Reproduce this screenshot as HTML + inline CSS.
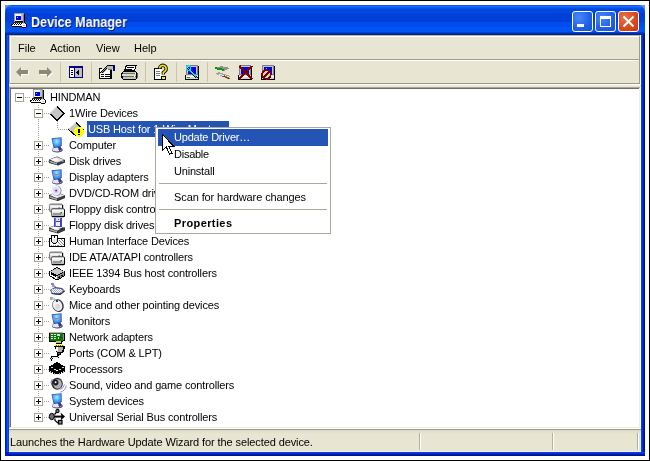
<!DOCTYPE html>
<html><head><meta charset="utf-8"><style>
*{margin:0;padding:0;box-sizing:border-box}
html,body{width:650px;height:461px;overflow:hidden;background:#fff;font-family:"Liberation Sans",sans-serif;font-size:11px;color:#000}
.a{position:absolute}
.t{position:absolute;white-space:nowrap;line-height:16px;height:16px}
.tr{letter-spacing:-0.15px}
.t{will-change:transform}
svg{position:absolute;display:block;overflow:visible}
</style></head><body>

<div class="a" style="left:0;top:0;width:650px;height:461px;border:1px solid #000;background:#fff"></div>
<div class="a" style="left:5px;top:5px;width:640px;height:451px;background:#0845E0"></div>
<div class="a" style="left:5px;top:5px;width:8px;height:8px;background:#7890DC"></div>
<div class="a" style="left:637px;top:5px;width:8px;height:8px;background:#7890DC"></div>
<div class="a" style="left:5px;top:5px;width:640px;height:30px;border-radius:7px 7px 0 0;background:linear-gradient(to bottom,
#1050E0 0px,#1050E0 1px,#2070FF 1px,#2070FF 2px,#0860F8 2px,#0860F8 3px,#0050F0 3px,#0050F0 4px,#0048E0 4px,#0048E0 8px,#0040D8 8px,#0040D8 17px,#004CEC 17px,#004CEC 22px,#0054F4 22px,#0054F4 27px,#0040D0 27px,#0040D0 28px,#0030B0 28px,#0030B0 29px,#002090 29px)"></div>
<div class="a" style="left:5px;top:35px;width:1px;height:421px;background:#0018D0"></div>
<div class="a" style="left:6px;top:35px;width:1px;height:421px;background:#0030E0"></div>
<div class="a" style="left:7px;top:35px;width:1px;height:421px;background:#0858F4"></div>
<div class="a" style="left:8px;top:35px;width:1px;height:421px;background:#0044E4"></div>
<div class="a" style="left:641px;top:35px;width:1px;height:421px;background:#0845EA"></div>
<div class="a" style="left:642px;top:35px;width:1px;height:421px;background:#0030D8"></div>
<div class="a" style="left:643px;top:35px;width:1px;height:421px;background:#001CB0"></div>
<div class="a" style="left:644px;top:35px;width:1px;height:421px;background:#00138C"></div>
<div class="a" style="left:5px;top:452px;width:640px;height:1px;background:#0841E6"></div>
<div class="a" style="left:5px;top:453px;width:640px;height:1px;background:#0030D0"></div>
<div class="a" style="left:5px;top:454px;width:640px;height:1px;background:#001CB0"></div>
<div class="a" style="left:5px;top:455px;width:640px;height:1px;background:#00138C"></div>
<div class="a" style="left:5px;top:452px;width:4px;height:4px;background:#0018D0"></div>
<div class="a" style="left:9px;top:35px;width:632px;height:417px;background:#E8E6D2"></div>
<div class="a" style="left:9px;top:35px;width:632px;height:1px;background:#C0B898"></div>
<div class="a" style="left:9px;top:35px;width:1px;height:52px;background:#C0B898"></div>
<div class="a" style="left:10px;top:36px;width:631px;height:1px;background:#fff"></div>
<div class="a" style="left:10px;top:36px;width:1px;height:49px;background:#fff"></div>
<div class="a" style="left:11px;top:59px;width:630px;height:1px;background:#A09C88"></div>
<div class="a" style="left:11px;top:60px;width:630px;height:1px;background:#fff"></div>
<div class="a" style="left:10px;top:83px;width:630px;height:1px;background:#9C9880"></div>
<div class="a" style="left:9px;top:84px;width:632px;height:1px;background:#fff"></div>
<div class="a" style="left:9px;top:85px;width:632px;height:1px;background:#F0EEDC"></div>
<div class="a" style="left:639px;top:36px;width:1px;height:48px;background:#A09C88"></div>
<div class="a" style="left:640px;top:35px;width:1px;height:50px;background:#fff"></div>
<div class="a" style="left:11px;top:59px;width:628px;height:1px;background:#A09C88"></div>
<div class="a" style="left:10px;top:60px;width:629px;height:1px;background:#fff"></div>
<div class="t" style="left:18px;top:40px">File</div>
<div class="t" style="left:50px;top:40px">Action</div>
<div class="t" style="left:96px;top:40px">View</div>
<div class="t" style="left:134px;top:40px">Help</div>
<div class="a" style="left:60px;top:62px;width:1px;height:20px;background:#C8C4B0"></div>
<div class="a" style="left:91px;top:62px;width:1px;height:20px;background:#C8C4B0"></div>
<div class="a" style="left:145px;top:62px;width:1px;height:20px;background:#C8C4B0"></div>
<div class="a" style="left:176px;top:62px;width:1px;height:20px;background:#C8C4B0"></div>
<div class="a" style="left:207px;top:62px;width:1px;height:20px;background:#C8C4B0"></div>
<svg class="a" style="left:0;top:0" width="60" height="90" viewBox="0 0 60 90"><polygon points="16,72 21,67 21,70 28,70 28,74 21,74 21,77" fill="#fff" transform="translate(1,1)"/><polygon points="16,72 21,67 21,70 28,70 28,74 21,74 21,77" fill="#8C8978"/><polygon points="52,72 47,67 47,70 39,70 39,74 47,74 47,77" fill="#fff" transform="translate(1,1)"/><polygon points="52,72 47,67 47,70 39,70 39,74 47,74 47,77" fill="#8C8978"/></svg>
<svg class="a" style="left:69px;top:66px" width="16" height="16" viewBox="0 0 16 16" shape-rendering="crispEdges"><rect x="0" y="0" width="14" height="12" fill="#000080"/><rect x="1" y="2" width="4" height="9" fill="#fff"/><rect x="6" y="2" width="7" height="9" fill="#C0C0C0"/><rect x="2" y="4" width="2" height="1" fill="#000"/><rect x="2" y="6" width="2" height="1" fill="#000"/><rect x="2" y="8" width="2" height="1" fill="#000"/><polygon points="10,3.5 7,6.5 10,9.5" fill="#000"/></svg>
<svg class="a" style="left:98px;top:64px" width="18" height="16" viewBox="0 0 18 16" shape-rendering="crispEdges"><rect x="1" y="4" width="13" height="11" fill="#000"/><rect x="2" y="5" width="10" height="9" fill="#fff"/><rect x="3" y="10" width="3" height="1" fill="#000"/><rect x="7" y="10" width="5" height="1" fill="#000"/><rect x="3" y="12" width="3" height="1" fill="#000"/><rect x="7" y="12" width="5" height="1" fill="#000"/><rect x="4" y="4" width="8" height="1" fill="#E8E6D2"/><rect x="12" y="4" width="1" height="1" fill="#E8E6D2"/><rect x="2" y="8" width="1" height="1" fill="#000"/><rect x="3" y="7" width="1" height="1" fill="#000"/><rect x="3" y="8" width="1" height="1" fill="#A0A0A0"/><rect x="4" y="6" width="1" height="1" fill="#000"/><rect x="4" y="7" width="1" height="1" fill="#A0A0A0"/><rect x="4" y="8" width="1" height="1" fill="#000"/><rect x="5" y="5" width="1" height="1" fill="#000"/><rect x="5" y="6" width="1" height="1" fill="#A0A0A0"/><rect x="5" y="7" width="1" height="1" fill="#000"/><rect x="5" y="8" width="1" height="1" fill="#A0A0A0"/><rect x="6" y="4" width="1" height="1" fill="#000"/><rect x="6" y="5" width="1" height="1" fill="#A0A0A0"/><rect x="6" y="6" width="1" height="1" fill="#000"/><rect x="6" y="7" width="1" height="1" fill="#A0A0A0"/><rect x="7" y="3" width="1" height="1" fill="#000"/><rect x="7" y="4" width="1" height="1" fill="#A0A0A0"/><rect x="7" y="5" width="1" height="1" fill="#000"/><rect x="7" y="6" width="1" height="1" fill="#A0A0A0"/><rect x="8" y="2" width="1" height="1" fill="#000"/><rect x="8" y="3" width="1" height="1" fill="#A0A0A0"/><rect x="8" y="4" width="1" height="1" fill="#000"/><rect x="8" y="5" width="1" height="1" fill="#A0A0A0"/><rect x="9" y="1" width="1" height="1" fill="#000"/><rect x="9" y="2" width="1" height="1" fill="#A0A0A0"/><rect x="9" y="3" width="1" height="1" fill="#000"/><rect x="9" y="4" width="1" height="1" fill="#A0A0A0"/><rect x="10" y="1" width="1" height="1" fill="#A0A0A0"/><rect x="10" y="2" width="1" height="1" fill="#000"/><rect x="10" y="3" width="1" height="1" fill="#A0A0A0"/><rect x="9" y="1" width="6" height="1" fill="#000"/><rect x="9" y="2" width="6" height="3" fill="#B8B8B8"/><rect x="10" y="5" width="4" height="1" fill="#707070"/><rect x="15" y="1" width="2" height="6" fill="#000080"/></svg>
<svg class="a" style="left:121px;top:64px" width="17" height="16" viewBox="0 0 17 16" shape-rendering="crispEdges"><polygon points="5,1 16,1 14,7 3,7" fill="#000"/><polygon points="6,2 14.6,2 13.2,6 4.4,6" fill="#fff"/><rect x="6" y="3" width="7" height="1" fill="#000"/><rect x="5" y="5" width="6" height="1" fill="#000"/><rect x="2" y="7" width="13" height="1" fill="#000"/><rect x="1" y="8" width="1" height="7" fill="#000"/><rect x="0" y="9" width="1" height="5" fill="#000"/><rect x="2" y="15" width="13" height="1" fill="#000"/><rect x="15" y="8" width="1" height="7" fill="#000"/><rect x="2" y="8" width="13" height="1" fill="#C8C8C8"/><rect x="2" y="9" width="13" height="1" fill="#707070"/><rect x="1" y="10" width="14" height="2" fill="#D8D8D8"/><rect x="8" y="11" width="3" height="1" fill="#F0F000"/><rect x="2" y="12" width="13" height="1" fill="#707070"/><rect x="2" y="13" width="13" height="2" fill="#C0C0C0"/><rect x="14" y="9" width="1" height="1" fill="#fff"/><rect x="13" y="12" width="1" height="1" fill="#fff"/><rect x="16" y="9" width="1" height="5" fill="#606060"/></svg>
<svg class="a" style="left:154px;top:64px" width="16" height="16" viewBox="0 0 16 16" shape-rendering="crispEdges"><rect x="0" y="4" width="8" height="12" fill="#000"/><rect x="1" y="5" width="7" height="10" fill="#fff"/><rect x="2" y="7" width="4" height="1" fill="#808080"/><rect x="2" y="9" width="4" height="1" fill="#808080"/><rect x="2" y="11" width="4" height="1" fill="#808080"/><path d="M5.6,4.4 A3.3,3.3 0 1 1 11,7.2 L9.3,8.6 L9.3,10.6" fill="none" stroke="#000" stroke-width="3.4" shape-rendering="geometricPrecision"/><path d="M5.6,4.4 A3.3,3.3 0 1 1 11,7.2 L9.3,8.6 L9.3,10.6" fill="none" stroke="#F8F000" stroke-width="1.6" shape-rendering="geometricPrecision"/><rect x="7" y="12" width="5" height="4" fill="#000"/><rect x="8" y="13" width="3" height="2" fill="#F8F000"/></svg>
<svg class="a" style="left:185px;top:64px" width="16" height="16" viewBox="0 0 16 16" shape-rendering="crispEdges"><rect x="1" y="1" width="12" height="10" fill="#808080"/><rect x="2" y="2" width="10" height="8" fill="#C8C8C8"/><rect x="3" y="3" width="8" height="7" fill="#0000F0"/><rect x="13" y="2" width="1" height="9" fill="#000"/><rect x="0" y="11" width="14" height="5" fill="#000"/><rect x="1" y="11" width="12" height="4" fill="#D8D8D8"/><rect x="1" y="12" width="12" height="1" fill="#fff"/><rect x="2" y="13" width="3" height="1" fill="#00A000"/><path d="M3,4 L12,14" stroke="#000" stroke-width="2.2"/><path d="M3,4 L12,14" stroke="#00E8F0" stroke-width="1.2"/><circle cx="3.5" cy="4" r="2.2" fill="none" stroke="#00E0F0" stroke-width="1.3"/></svg>
<svg class="a" style="left:214px;top:64px" width="17" height="16" viewBox="0 0 17 16" shape-rendering="crispEdges"><polygon points="1,4 7,2 16,4 10,7" fill="#909090"/><path d="M1,4 L10,6" stroke="#109010" stroke-width="2"/><polygon points="1,10 5,8 16,12 14,14" fill="#A0A0A0"/><path d="M5,10 L15,13" stroke="#fff" stroke-width="0.8"/><path d="M10,12 L15,14" stroke="#C06010" stroke-width="1.6"/><path d="M8,12 L16,15" stroke="#000" stroke-width="0.8" opacity="0.7"/></svg>
<svg class="a" style="left:238px;top:64px" width="16" height="16" viewBox="0 0 16 16" shape-rendering="crispEdges"><rect x="1" y="1" width="12" height="10" fill="#808080"/><rect x="2" y="2" width="10" height="8" fill="#C8C8C8"/><rect x="3" y="3" width="8" height="7" fill="#0000F0"/><rect x="13" y="2" width="1" height="9" fill="#000"/><rect x="0" y="11" width="14" height="5" fill="#000"/><rect x="1" y="11" width="12" height="4" fill="#D8D8D8"/><rect x="1" y="12" width="12" height="1" fill="#fff"/><rect x="4" y="4" width="1" height="2" fill="#00FFFF"/><path d="M1.5,2 L14,15 M14,2 L1.5,15" stroke="#800000" stroke-width="2.2"/></svg>
<svg class="a" style="left:261px;top:64px" width="16" height="16" viewBox="0 0 16 16" shape-rendering="crispEdges"><rect x="1" y="1" width="12" height="10" fill="#808080"/><rect x="2" y="2" width="10" height="8" fill="#C8C8C8"/><rect x="3" y="3" width="8" height="7" fill="#0000F0"/><rect x="13" y="2" width="1" height="9" fill="#000"/><rect x="0" y="11" width="14" height="5" fill="#000"/><rect x="1" y="11" width="12" height="4" fill="#D8D8D8"/><rect x="1" y="12" width="12" height="1" fill="#fff"/><rect x="5" y="4" width="1" height="1" fill="#00FFFF"/><circle cx="5.5" cy="10.5" r="4.2" fill="#D0D0D0" stroke="#800000" stroke-width="2"/><path d="M3,13 L8,8" stroke="#800000" stroke-width="2"/></svg>
<div class="a" style="left:9px;top:87px;width:632px;height:342px;background:#fff"></div>
<div class="a" style="left:9px;top:87px;width:631px;height:1px;background:#ACA899"></div>
<div class="a" style="left:9px;top:87px;width:1px;height:341px;background:#ACA899"></div>
<div class="a" style="left:10px;top:88px;width:629px;height:1px;background:#716F64"></div>
<div class="a" style="left:10px;top:88px;width:1px;height:339px;background:#716F64"></div>
<div class="a" style="left:10px;top:427px;width:630px;height:1px;background:#F1EFE2"></div>
<div class="a" style="left:639px;top:88px;width:1px;height:340px;background:#F1EFE2"></div>
<div class="a" style="left:38px;top:105px;width:1px;height:312px;background:repeating-linear-gradient(to bottom,#A0A0A0 0 1px,transparent 1px 2px)"></div>
<div class="a" style="left:57px;top:121px;width:1px;height:8px;background:repeating-linear-gradient(to bottom,#A0A0A0 0 1px,transparent 1px 2px)"></div>
<div class="a" style="left:25px;top:97px;width:5px;height:1px;background:repeating-linear-gradient(to right,#A0A0A0 0 1px,transparent 1px 2px)"></div>
<div class="a" style="left:44px;top:113px;width:5px;height:1px;background:repeating-linear-gradient(to right,#A0A0A0 0 1px,transparent 1px 2px)"></div>
<div class="a" style="left:58px;top:129px;width:10px;height:1px;background:repeating-linear-gradient(to right,#A0A0A0 0 1px,transparent 1px 2px)"></div>
<div class="a" style="left:44px;top:145px;width:5px;height:1px;background:repeating-linear-gradient(to right,#A0A0A0 0 1px,transparent 1px 2px)"></div>
<div class="a" style="left:44px;top:161px;width:5px;height:1px;background:repeating-linear-gradient(to right,#A0A0A0 0 1px,transparent 1px 2px)"></div>
<div class="a" style="left:44px;top:177px;width:5px;height:1px;background:repeating-linear-gradient(to right,#A0A0A0 0 1px,transparent 1px 2px)"></div>
<div class="a" style="left:44px;top:193px;width:5px;height:1px;background:repeating-linear-gradient(to right,#A0A0A0 0 1px,transparent 1px 2px)"></div>
<div class="a" style="left:44px;top:209px;width:5px;height:1px;background:repeating-linear-gradient(to right,#A0A0A0 0 1px,transparent 1px 2px)"></div>
<div class="a" style="left:44px;top:225px;width:5px;height:1px;background:repeating-linear-gradient(to right,#A0A0A0 0 1px,transparent 1px 2px)"></div>
<div class="a" style="left:44px;top:241px;width:5px;height:1px;background:repeating-linear-gradient(to right,#A0A0A0 0 1px,transparent 1px 2px)"></div>
<div class="a" style="left:44px;top:257px;width:5px;height:1px;background:repeating-linear-gradient(to right,#A0A0A0 0 1px,transparent 1px 2px)"></div>
<div class="a" style="left:44px;top:273px;width:5px;height:1px;background:repeating-linear-gradient(to right,#A0A0A0 0 1px,transparent 1px 2px)"></div>
<div class="a" style="left:44px;top:289px;width:5px;height:1px;background:repeating-linear-gradient(to right,#A0A0A0 0 1px,transparent 1px 2px)"></div>
<div class="a" style="left:44px;top:305px;width:5px;height:1px;background:repeating-linear-gradient(to right,#A0A0A0 0 1px,transparent 1px 2px)"></div>
<div class="a" style="left:44px;top:321px;width:5px;height:1px;background:repeating-linear-gradient(to right,#A0A0A0 0 1px,transparent 1px 2px)"></div>
<div class="a" style="left:44px;top:337px;width:5px;height:1px;background:repeating-linear-gradient(to right,#A0A0A0 0 1px,transparent 1px 2px)"></div>
<div class="a" style="left:44px;top:353px;width:5px;height:1px;background:repeating-linear-gradient(to right,#A0A0A0 0 1px,transparent 1px 2px)"></div>
<div class="a" style="left:44px;top:369px;width:5px;height:1px;background:repeating-linear-gradient(to right,#A0A0A0 0 1px,transparent 1px 2px)"></div>
<div class="a" style="left:44px;top:385px;width:5px;height:1px;background:repeating-linear-gradient(to right,#A0A0A0 0 1px,transparent 1px 2px)"></div>
<div class="a" style="left:44px;top:401px;width:5px;height:1px;background:repeating-linear-gradient(to right,#A0A0A0 0 1px,transparent 1px 2px)"></div>
<div class="a" style="left:44px;top:417px;width:5px;height:1px;background:repeating-linear-gradient(to right,#A0A0A0 0 1px,transparent 1px 2px)"></div>
<div class="a" style="left:0;top:0"></div>
<div class="a" style="left:15px;top:93px;width:9px;height:9px;border:1px solid #A8A490;background:#fff"></div>
<div class="a" style="left:17px;top:97px;width:5px;height:1px;background:#000"></div>
<svg class="a" style="left:30px;top:89px" width="16" height="16" viewBox="0 0 16 16" shape-rendering="crispEdges"><rect x="3" y="0" width="10" height="9" fill="#A0A0A0"/><rect x="4" y="1" width="8" height="7" fill="#F4F4F0"/><rect x="5" y="3" width="5" height="4" fill="#0000F0"/><rect x="6" y="4" width="1" height="1" fill="#00FFFF"/><rect x="10" y="1" width="2" height="7" fill="#C0C0C0"/><rect x="12" y="1" width="1" height="8" fill="#808080"/><rect x="13" y="1" width="1" height="8" fill="#000"/><rect x="4" y="8" width="9" height="1" fill="#000"/><rect x="2" y="9" width="10" height="1" fill="#303030"/><rect x="2" y="10" width="1" height="1" fill="#000"/><rect x="3" y="10" width="1" height="1" fill="#fff"/><rect x="4" y="10" width="1" height="1" fill="#000"/><rect x="5" y="10" width="1" height="1" fill="#fff"/><rect x="6" y="10" width="1" height="1" fill="#000"/><rect x="7" y="10" width="1" height="1" fill="#fff"/><rect x="8" y="10" width="1" height="1" fill="#000"/><rect x="9" y="10" width="1" height="1" fill="#fff"/><rect x="10" y="10" width="1" height="1" fill="#000"/><rect x="11" y="10" width="1" height="1" fill="#fff"/><rect x="1" y="11" width="1" height="1" fill="#000"/><rect x="2" y="11" width="1" height="1" fill="#fff"/><rect x="3" y="11" width="1" height="1" fill="#000"/><rect x="4" y="11" width="1" height="1" fill="#fff"/><rect x="5" y="11" width="1" height="1" fill="#000"/><rect x="6" y="11" width="1" height="1" fill="#fff"/><rect x="7" y="11" width="1" height="1" fill="#000"/><rect x="8" y="11" width="1" height="1" fill="#fff"/><rect x="9" y="11" width="1" height="1" fill="#000"/><rect x="10" y="11" width="1" height="1" fill="#fff"/><rect x="11" y="11" width="1" height="1" fill="#000"/><rect x="0" y="12" width="12" height="1" fill="#fff"/><rect x="0" y="11" width="1" height="2" fill="#000"/><rect x="1" y="13" width="11" height="1" fill="#000"/><rect x="12" y="8" width="1" height="2" fill="#909090"/><rect x="13" y="9" width="1" height="2" fill="#000"/><rect x="11" y="11" width="4" height="3" fill="#fff"/><rect x="12" y="10" width="2" height="1" fill="#D0D0D0"/><rect x="15" y="11" width="1" height="3" fill="#000"/><rect x="14" y="10" width="1" height="1" fill="#000"/><rect x="11" y="14" width="4" height="1" fill="#000"/><rect x="12" y="12" width="2" height="1" fill="#C0C0C0"/></svg>
<div class="t tr" style="left:50px;top:89px">HINDMAN</div>
<div class="a" style="left:34px;top:109px;width:9px;height:9px;border:1px solid #A8A490;background:#fff"></div>
<div class="a" style="left:36px;top:113px;width:5px;height:1px;background:#000"></div>
<svg class="a" style="left:49px;top:105px" width="16" height="16" viewBox="0 0 16 16" shape-rendering="crispEdges"><polygon points="8,1 16,8.5 8,16 0,8.5" fill="#000"/><polygon points="8,1 0,8.5 1.6,8.5 8,2.6" fill="#D8D8D8"/><polygon points="8,2.5 14.4,8.5 8,14.5 1.6,8.5" fill="#C4C4C4"/></svg>
<div class="t tr" style="left:69px;top:105px">1Wire Devices</div>
<svg class="a" style="left:68px;top:121px" width="16" height="16" viewBox="0 0 16 16" shape-rendering="crispEdges"><polygon points="8,1 15.8,8.3 8,15.8 -0.5,8.3" fill="#000"/><polygon points="8,1 -0.5,8.3 1.1,8.3 8,2.5" fill="#D8D8D8"/><polygon points="8,2.5 14.3,8.3 8,14.3 1.1,8.3" fill="#C4C4C4"/><circle cx="11" cy="10.8" r="5.1" fill="#FFFF00"/><rect x="10" y="8" width="2" height="4" fill="#000"/><rect x="10" y="13" width="2" height="1" fill="#000"/></svg>
<div class="a" style="left:87px;top:121px;width:142px;height:16px;background:#2455B5"></div>
<div class="t tr" style="left:88px;top:121px;color:#fff">USB Host for 1-Wire Master</div>
<div class="a" style="left:34px;top:141px;width:9px;height:9px;border:1px solid #A8A490;background:#fff"></div>
<div class="a" style="left:36px;top:145px;width:5px;height:1px;background:#000"></div>
<div class="a" style="left:38px;top:143px;width:1px;height:5px;background:#000"></div>
<svg class="a" style="left:49px;top:137px" width="16" height="16" viewBox="0 0 16 16"><defs><radialGradient id="gc" cx="0.5" cy="0.35" r="0.7"><stop offset="0" stop-color="#A8E8FF"/><stop offset="0.6" stop-color="#38A8F8"/><stop offset="1" stop-color="#1870E0"/></radialGradient></defs><polygon points="2.5,1.2 12.6,0.2 12.8,8.9 4.6,11.2" fill="#5050A8"/><polygon points="3.3,1.9 11.8,1.0 12.0,8.4 5.0,10.3" fill="url(#gc)"/><ellipse cx="8.3" cy="12.9" rx="5.4" ry="2.6" fill="#404078"/><ellipse cx="7.9" cy="12.6" rx="4.6" ry="1.9" fill="#E8E8F4"/><polygon points="9,10 11.5,9 12.5,13 10,14" fill="#3030A0"/></svg>
<div class="t tr" style="left:69px;top:137px">Computer</div>
<div class="a" style="left:34px;top:157px;width:9px;height:9px;border:1px solid #A8A490;background:#fff"></div>
<div class="a" style="left:36px;top:161px;width:5px;height:1px;background:#000"></div>
<div class="a" style="left:38px;top:159px;width:1px;height:5px;background:#000"></div>
<svg class="a" style="left:49px;top:153px" width="16" height="16" viewBox="0 0 16 16"><polygon points="0,6.5 8,3.5 16,7.0 16,9.5 9,12.5 0,10.0" fill="#202020"/><polygon points="0.5,6.5 8,4.1 15.5,7.0 8,9.7" fill="#E0E0E0"/><polygon points="2,6.7 6,5.1 10,7.0 6,8.5" fill="#fff"/><polygon points="0.5,7.5 8,10.1 8,11.8 0.5,9.3" fill="#A8A8A8"/><polygon points="8,10.1 15.5,7.5 15.5,9.1 9,12.0" fill="#404040"/><ellipse cx="13.5" cy="8.3" rx="1.2" ry="0.8" fill="#8090F0"/></svg>
<div class="t tr" style="left:69px;top:153px">Disk drives</div>
<div class="a" style="left:34px;top:173px;width:9px;height:9px;border:1px solid #A8A490;background:#fff"></div>
<div class="a" style="left:36px;top:177px;width:5px;height:1px;background:#000"></div>
<div class="a" style="left:38px;top:175px;width:1px;height:5px;background:#000"></div>
<svg class="a" style="left:49px;top:169px" width="16" height="16" viewBox="0 0 16 16"><defs><radialGradient id="gp" cx="0.5" cy="0.35" r="0.7"><stop offset="0" stop-color="#A8E8FF"/><stop offset="0.6" stop-color="#38A8F8"/><stop offset="1" stop-color="#1870E0"/></radialGradient></defs><polygon points="2.5,1.2 12.6,0.2 12.8,8.9 4.6,11.2" fill="#5050A8"/><polygon points="3.3,1.9 11.8,1.0 12.0,8.4 5.0,10.3" fill="url(#gp)"/><ellipse cx="8.3" cy="12.9" rx="5.4" ry="2.6" fill="#404078"/><ellipse cx="7.9" cy="12.6" rx="4.6" ry="1.9" fill="#E8E8F4"/><polygon points="9,10 11.5,9 12.5,13 10,14" fill="#3030A0"/><path d="M4.5,4.8 Q7,6.5 11,4.5" stroke="#C06080" stroke-width="1.2" fill="none" opacity="0.8"/></svg>
<div class="t tr" style="left:69px;top:169px">Display adapters</div>
<div class="a" style="left:34px;top:189px;width:9px;height:9px;border:1px solid #A8A490;background:#fff"></div>
<div class="a" style="left:36px;top:193px;width:5px;height:1px;background:#000"></div>
<div class="a" style="left:38px;top:191px;width:1px;height:5px;background:#000"></div>
<svg class="a" style="left:49px;top:185px" width="16" height="16" viewBox="0 0 16 16"><polygon points="0,10 8,7 16,10.5 16,13 9,16 0,13.5" fill="#202020"/><polygon points="0.5,10 8,7.6 15.5,10.5 8,13.2" fill="#E0E0E0"/><polygon points="2,10.2 6,8.6 10,10.5 6,12" fill="#fff"/><polygon points="0.5,11 8,13.6 8,15.3 0.5,12.8" fill="#A8A8A8"/><polygon points="8,13.6 15.5,11 15.5,12.6 9,15.5" fill="#404040"/><ellipse cx="7.6" cy="5.6" rx="4.9" ry="5.2" fill="#808080"/><ellipse cx="7.1" cy="5.6" rx="4.5" ry="4.9" fill="#F4F4FF"/><ellipse cx="7.1" cy="5.6" rx="3" ry="3.3" fill="#D0D8FF"/><circle cx="7.1" cy="5.6" r="1.6" fill="#F0C0E0"/><circle cx="7.1" cy="5.6" r="0.9" fill="#303040"/></svg>
<div class="t tr" style="left:69px;top:185px">DVD/CD-ROM drives</div>
<div class="a" style="left:34px;top:205px;width:9px;height:9px;border:1px solid #A8A490;background:#fff"></div>
<div class="a" style="left:36px;top:209px;width:5px;height:1px;background:#000"></div>
<div class="a" style="left:38px;top:207px;width:1px;height:5px;background:#000"></div>
<svg class="a" style="left:49px;top:201px" width="16" height="16" viewBox="0 0 16 16"><defs><linearGradient id="bx" x1="0" y1="0" x2="0" y2="1"><stop offset="0" stop-color="#909090"/><stop offset="0.25" stop-color="#FFFFFF"/><stop offset="0.7" stop-color="#C8C8C8"/><stop offset="1" stop-color="#A0A0A0"/></linearGradient></defs><rect x="0.5" y="3" width="13" height="8" rx="1.5" fill="url(#bx)" stroke="#606060" stroke-width="0.8"/><rect x="13" y="4" width="1.2" height="6" fill="#000"/><rect x="9.5" y="6.5" width="1.5" height="1.5" fill="#007800"/><rect x="2.5" y="7.5" width="13" height="8.5" rx="1.5" fill="url(#bx)" stroke="#505050" stroke-width="0.8"/><rect x="15" y="8.5" width="1" height="7" fill="#000"/><rect x="3" y="15" width="12.5" height="1" fill="#000"/><rect x="4" y="12.5" width="8" height="1" fill="#606060"/><rect x="11.5" y="11" width="1.5" height="1.5" fill="#007800"/></svg>
<div class="t tr" style="left:69px;top:201px">Floppy disk controllers</div>
<div class="a" style="left:34px;top:221px;width:9px;height:9px;border:1px solid #A8A490;background:#fff"></div>
<div class="a" style="left:36px;top:225px;width:5px;height:1px;background:#000"></div>
<div class="a" style="left:38px;top:223px;width:1px;height:5px;background:#000"></div>
<svg class="a" style="left:49px;top:217px" width="16" height="16" viewBox="0 0 16 16"><polygon points="0,10.5 8,7.5 16,11.0 16,13.5 9,16.5 0,14.0" fill="#202020"/><polygon points="0.5,10.5 8,8.1 15.5,11.0 8,13.7" fill="#E0E0E0"/><polygon points="2,10.7 6,9.1 10,11.0 6,12.5" fill="#fff"/><polygon points="0.5,11.5 8,14.1 8,15.8 0.5,13.3" fill="#A8A8A8"/><polygon points="8,14.1 15.5,11.5 15.5,13.1 9,16.0" fill="#404040"/><rect x="5" y="1" width="8" height="9" fill="#4444C0"/><rect x="6" y="1" width="1" height="9" fill="#7070E0"/><rect x="7" y="1" width="4" height="3" fill="#E0E0E8"/><rect x="7" y="5" width="4" height="4" fill="#F0F0F8"/><rect x="9" y="2" width="1" height="1" fill="#606080"/><polygon points="10,12 15,10 16,11 11,13" fill="#202030"/><rect x="13" y="10" width="2" height="1" fill="#40A040"/></svg>
<div class="t tr" style="left:69px;top:217px">Floppy disk drives</div>
<div class="a" style="left:34px;top:237px;width:9px;height:9px;border:1px solid #A8A490;background:#fff"></div>
<div class="a" style="left:36px;top:241px;width:5px;height:1px;background:#000"></div>
<div class="a" style="left:38px;top:239px;width:1px;height:5px;background:#000"></div>
<svg class="a" style="left:49px;top:233px" width="16" height="16" viewBox="0 0 16 16" shape-rendering="crispEdges"><rect x="0" y="5" width="16" height="9" fill="#000"/><rect x="1" y="6" width="14" height="6" fill="#fff"/><rect x="1" y="12" width="14" height="1" fill="#fff"/><rect x="9" y="9" width="1" height="1" fill="#808080"/><rect x="9" y="12" width="1" height="1" fill="#808080"/><rect x="10" y="7" width="1" height="1" fill="#808080"/><rect x="10" y="10" width="1" height="1" fill="#808080"/><rect x="11" y="8" width="1" height="1" fill="#808080"/><rect x="11" y="11" width="1" height="1" fill="#808080"/><rect x="12" y="6" width="1" height="1" fill="#808080"/><rect x="12" y="9" width="1" height="1" fill="#808080"/><rect x="12" y="12" width="1" height="1" fill="#808080"/><rect x="13" y="7" width="1" height="1" fill="#808080"/><rect x="13" y="10" width="1" height="1" fill="#808080"/><rect x="14" y="8" width="1" height="1" fill="#808080"/><rect x="14" y="11" width="1" height="1" fill="#808080"/><rect x="2" y="12" width="1" height="1" fill="#909090"/><rect x="4" y="12" width="1" height="1" fill="#909090"/><rect x="6" y="12" width="1" height="1" fill="#909090"/><rect x="8" y="12" width="1" height="1" fill="#909090"/><rect x="2" y="2" width="7" height="3" fill="#000"/><rect x="3" y="3" width="2" height="2" fill="#F8F8F8"/><rect x="6" y="3" width="2" height="2" fill="#F8F8F8"/><rect x="2" y="5" width="1" height="4" fill="#000"/><rect x="8" y="5" width="1" height="4" fill="#000"/><rect x="3" y="9" width="1" height="1" fill="#000"/><rect x="7" y="9" width="1" height="1" fill="#000"/><rect x="4" y="10" width="3" height="1" fill="#000"/><rect x="3" y="5" width="5" height="4" fill="#E8E8E8"/><rect x="4" y="9" width="3" height="1" fill="#D8D8D8"/><rect x="3" y="5" width="5" height="1" fill="#fff"/></svg>
<div class="t tr" style="left:69px;top:233px">Human Interface Devices</div>
<div class="a" style="left:34px;top:253px;width:9px;height:9px;border:1px solid #A8A490;background:#fff"></div>
<div class="a" style="left:36px;top:257px;width:5px;height:1px;background:#000"></div>
<div class="a" style="left:38px;top:255px;width:1px;height:5px;background:#000"></div>
<svg class="a" style="left:49px;top:249px" width="16" height="16" viewBox="0 0 16 16"><defs><linearGradient id="bx" x1="0" y1="0" x2="0" y2="1"><stop offset="0" stop-color="#909090"/><stop offset="0.25" stop-color="#FFFFFF"/><stop offset="0.7" stop-color="#C8C8C8"/><stop offset="1" stop-color="#A0A0A0"/></linearGradient></defs><rect x="0.5" y="3" width="13" height="8" rx="1.5" fill="url(#bx)" stroke="#606060" stroke-width="0.8"/><rect x="13" y="4" width="1.2" height="6" fill="#000"/><rect x="9.5" y="6.5" width="1.5" height="1.5" fill="#007800"/><rect x="2.5" y="7.5" width="13" height="8.5" rx="1.5" fill="url(#bx)" stroke="#505050" stroke-width="0.8"/><rect x="15" y="8.5" width="1" height="7" fill="#000"/><rect x="3" y="15" width="12.5" height="1" fill="#000"/><rect x="4" y="12.5" width="8" height="1" fill="#606060"/><rect x="11.5" y="11" width="1.5" height="1.5" fill="#007800"/></svg>
<div class="t tr" style="left:69px;top:249px">IDE ATA/ATAPI controllers</div>
<div class="a" style="left:34px;top:269px;width:9px;height:9px;border:1px solid #A8A490;background:#fff"></div>
<div class="a" style="left:36px;top:273px;width:5px;height:1px;background:#000"></div>
<div class="a" style="left:38px;top:271px;width:1px;height:5px;background:#000"></div>
<svg class="a" style="left:49px;top:265px" width="16" height="16" viewBox="0 0 16 16" shape-rendering="crispEdges"><polygon points="0,6.5 8,2 16,6.5 16,11 8,15.5 0,11" fill="#000"/><polygon points="1,6.5 8,2.8 15,6.5 8,10.3" fill="#C8C8C8"/><polygon points="1,7.2 8,11 8,14.5 1,10.5" fill="#fff"/><polygon points="8,11 15,7.2 15,10.5 8,14.5" fill="#8A8A8A"/><path d="M2,8.5 L3,9.5 L4,9 L5,10.5 L6,10.3 L7,12" fill="none" stroke="#000" stroke-width="1.2"/><path d="M3,6 L8,3.5 L13,6" fill="none" stroke="#909090" stroke-width="0.8" stroke-dasharray="1 1"/><path d="M9,13 L11,11.8 M12,11 L14,10" stroke="#000" stroke-width="1.2"/></svg>
<div class="t tr" style="left:69px;top:265px">IEEE 1394 Bus host controllers</div>
<div class="a" style="left:34px;top:285px;width:9px;height:9px;border:1px solid #A8A490;background:#fff"></div>
<div class="a" style="left:36px;top:289px;width:5px;height:1px;background:#000"></div>
<div class="a" style="left:38px;top:287px;width:1px;height:5px;background:#000"></div>
<svg class="a" style="left:49px;top:281px" width="16" height="16" viewBox="0 0 16 16"><polygon points="1,9 6,6 13,7 16,10 11,14 3,13" fill="#404060"/><polygon points="2,9 6,7 12.5,8 15,10 10.5,12.5 3,12" fill="#A0A8F8"/><rect x="3" y="8" width="1" height="1" fill="#fff"/><rect x="5" y="8" width="1" height="1" fill="#fff"/><rect x="7" y="8" width="1" height="1" fill="#fff"/><rect x="9" y="8" width="1" height="1" fill="#fff"/><rect x="11" y="8" width="1" height="1" fill="#fff"/><rect x="4" y="9" width="1" height="1" fill="#fff"/><rect x="6" y="9" width="1" height="1" fill="#fff"/><rect x="8" y="9" width="1" height="1" fill="#fff"/><rect x="10" y="9" width="1" height="1" fill="#fff"/><rect x="12" y="9" width="1" height="1" fill="#fff"/><rect x="3" y="10" width="1" height="1" fill="#fff"/><rect x="5" y="10" width="1" height="1" fill="#fff"/><rect x="7" y="10" width="1" height="1" fill="#fff"/><rect x="9" y="10" width="1" height="1" fill="#fff"/><rect x="11" y="10" width="1" height="1" fill="#fff"/><rect x="4" y="11" width="1" height="1" fill="#fff"/><rect x="6" y="11" width="1" height="1" fill="#fff"/><rect x="8" y="11" width="1" height="1" fill="#fff"/><rect x="10" y="11" width="1" height="1" fill="#fff"/><rect x="12" y="11" width="1" height="1" fill="#fff"/><polygon points="2,12 10,13 15,10 16,10.5 11,14 3,13" fill="#303040"/><rect x="2" y="2" width="3" height="2" fill="#8080D0"/><rect x="3" y="4" width="3" height="2" fill="#A0A0C0"/><rect x="5" y="5" width="2" height="1" fill="#A0A0E0"/></svg>
<div class="t tr" style="left:69px;top:281px">Keyboards</div>
<div class="a" style="left:34px;top:301px;width:9px;height:9px;border:1px solid #A8A490;background:#fff"></div>
<div class="a" style="left:36px;top:305px;width:5px;height:1px;background:#000"></div>
<div class="a" style="left:38px;top:303px;width:1px;height:5px;background:#000"></div>
<svg class="a" style="left:49px;top:297px" width="16" height="16" viewBox="0 0 16 16"><ellipse cx="9" cy="8.6" rx="5.6" ry="6.6" fill="#383838" transform="rotate(-28 9 8.6)"/><ellipse cx="8.6" cy="8.2" rx="4.6" ry="5.7" fill="#F2F2F2" transform="rotate(-28 9 8.6)"/><ellipse cx="8.8" cy="9.8" rx="2.5" ry="2.8" fill="#D8D8D8"/><rect x="1" y="0" width="3" height="3" fill="#A8A8A8"/><rect x="3" y="1" width="3" height="2" fill="#C8C8C8"/><rect x="7" y="3" width="2" height="2" fill="#3030B0"/></svg>
<div class="t tr" style="left:69px;top:297px">Mice and other pointing devices</div>
<div class="a" style="left:34px;top:317px;width:9px;height:9px;border:1px solid #A8A490;background:#fff"></div>
<div class="a" style="left:36px;top:321px;width:5px;height:1px;background:#000"></div>
<div class="a" style="left:38px;top:319px;width:1px;height:5px;background:#000"></div>
<svg class="a" style="left:49px;top:313px" width="16" height="16" viewBox="0 0 16 16"><defs><radialGradient id="gp" cx="0.5" cy="0.35" r="0.7"><stop offset="0" stop-color="#A8E8FF"/><stop offset="0.6" stop-color="#38A8F8"/><stop offset="1" stop-color="#1870E0"/></radialGradient></defs><polygon points="2.5,1.2 12.6,0.2 12.8,8.9 4.6,11.2" fill="#5050A8"/><polygon points="3.3,1.9 11.8,1.0 12.0,8.4 5.0,10.3" fill="url(#gp)"/><ellipse cx="8.3" cy="12.9" rx="5.4" ry="2.6" fill="#404078"/><ellipse cx="7.9" cy="12.6" rx="4.6" ry="1.9" fill="#E8E8F4"/><polygon points="9,10 11.5,9 12.5,13 10,14" fill="#3030A0"/><path d="M4.5,4.8 Q7,6.5 11,4.5" stroke="#C06080" stroke-width="1.2" fill="none" opacity="0.8"/></svg>
<div class="t tr" style="left:69px;top:313px">Monitors</div>
<div class="a" style="left:34px;top:333px;width:9px;height:9px;border:1px solid #A8A490;background:#fff"></div>
<div class="a" style="left:36px;top:337px;width:5px;height:1px;background:#000"></div>
<div class="a" style="left:38px;top:335px;width:1px;height:5px;background:#000"></div>
<svg class="a" style="left:49px;top:329px" width="16" height="16" viewBox="0 0 16 16" shape-rendering="crispEdges"><rect x="0" y="3" width="14" height="10" fill="#000"/><rect x="1" y="3" width="13" height="9" fill="#0A780A"/><rect x="0" y="3" width="14" height="1" fill="#B0B0B0"/><rect x="2" y="5" width="2" height="1" fill="#E8E8E8"/><rect x="5" y="5" width="2" height="1" fill="#E8E8E8"/><rect x="2" y="7" width="2" height="1" fill="#E8E8E8"/><rect x="5" y="7" width="2" height="1" fill="#E8E8E8"/><rect x="2" y="9" width="2" height="1" fill="#E8E8E8"/><rect x="5" y="9" width="2" height="1" fill="#E8E8E8"/><rect x="8" y="5" width="3" height="2" fill="#D8D8D8"/><rect x="9" y="8" width="1" height="2" fill="#D8D0A0"/><rect x="11" y="8" width="2" height="1" fill="#303030"/><rect x="1" y="4" width="1" height="1" fill="#A04000"/><rect x="1" y="6" width="1" height="1" fill="#A04000"/><rect x="14" y="4" width="2" height="8" fill="#000"/><rect x="14" y="5" width="1" height="6" fill="#909090"/><rect x="7" y="12" width="6" height="3" fill="#000"/><rect x="7" y="12" width="5" height="2" fill="#D8C040"/></svg>
<div class="t tr" style="left:69px;top:329px">Network adapters</div>
<div class="a" style="left:34px;top:349px;width:9px;height:9px;border:1px solid #A8A490;background:#fff"></div>
<div class="a" style="left:36px;top:353px;width:5px;height:1px;background:#000"></div>
<div class="a" style="left:38px;top:351px;width:1px;height:5px;background:#000"></div>
<svg class="a" style="left:49px;top:345px" width="16" height="16" viewBox="0 0 16 16" shape-rendering="crispEdges"><rect x="6" y="0" width="9" height="1" fill="#F8F800"/><rect x="7" y="0" width="1" height="1" fill="#707000"/><rect x="9" y="0" width="1" height="1" fill="#707000"/><rect x="11" y="0" width="1" height="1" fill="#707000"/><rect x="13" y="0" width="1" height="1" fill="#707000"/><polygon points="5,1 16,1 16,3 14,8 8,8 6,3" fill="#000"/><polygon points="6.5,2 14.5,2 13,7 8,7" fill="#B0B0B0"/><rect x="7" y="2" width="2" height="4" fill="#fff"/><rect x="8" y="8" width="4" height="2" fill="#000"/><rect x="9" y="8" width="2" height="1" fill="#606060"/><path d="M10,9.5 L8.5,12 L3.5,12 L1.5,15" fill="none" stroke="#000" stroke-width="2.6"/><path d="M10,9.5 L8.5,12 L3.5,12 L1.5,15" fill="none" stroke="#fff" stroke-width="0.9"/></svg>
<div class="t tr" style="left:69px;top:345px">Ports (COM &amp; LPT)</div>
<div class="a" style="left:34px;top:365px;width:9px;height:9px;border:1px solid #A8A490;background:#fff"></div>
<div class="a" style="left:36px;top:369px;width:5px;height:1px;background:#000"></div>
<div class="a" style="left:38px;top:367px;width:1px;height:5px;background:#000"></div>
<svg class="a" style="left:49px;top:361px" width="16" height="16" viewBox="0 0 16 16" shape-rendering="crispEdges"><polygon points="0,5.5 8,1 16,5.5 16,8 8,12.5 0,8" fill="#000"/><rect x="0" y="8" width="2" height="3" fill="#000"/><rect x="2" y="9" width="2" height="3" fill="#000"/><rect x="4" y="10" width="2" height="3" fill="#000"/><rect x="6" y="11" width="4" height="2" fill="#000"/><rect x="10" y="10" width="2" height="3" fill="#000"/><rect x="12" y="9" width="2" height="3" fill="#000"/><rect x="14" y="8" width="2" height="3" fill="#000"/><rect x="1" y="10" width="1" height="2" fill="#C0C0C0"/><rect x="3" y="11" width="1" height="2" fill="#fff"/><rect x="5" y="12" width="1" height="2" fill="#C0C0C0"/><rect x="10" y="12" width="1" height="2" fill="#C0C0C0"/><rect x="12" y="11" width="1" height="2" fill="#fff"/><rect x="14" y="10" width="1" height="2" fill="#C0C0C0"/><rect x="2" y="6" width="2" height="1" fill="#D8D8D8"/><rect x="5" y="8" width="2" height="1" fill="#D8D8D8"/><rect x="7" y="9" width="2" height="1" fill="#fff"/><rect x="10" y="8" width="2" height="1" fill="#D8D8D8"/><rect x="13" y="6" width="2" height="1" fill="#D8D8D8"/></svg>
<div class="t tr" style="left:69px;top:361px">Processors</div>
<div class="a" style="left:34px;top:381px;width:9px;height:9px;border:1px solid #A8A490;background:#fff"></div>
<div class="a" style="left:36px;top:385px;width:5px;height:1px;background:#000"></div>
<div class="a" style="left:38px;top:383px;width:1px;height:5px;background:#000"></div>
<svg class="a" style="left:49px;top:377px" width="16" height="16" viewBox="0 0 16 16"><ellipse cx="8.2" cy="6.8" rx="5.6" ry="6" fill="#282828"/><ellipse cx="8.6" cy="7" rx="4.2" ry="4.8" fill="#B0B0B0"/><ellipse cx="6.8" cy="5.6" rx="2.6" ry="2.8" fill="#181818"/><circle cx="6.6" cy="5.2" r="1" fill="#fff"/><path d="M3.2,2.3 Q1,5 3,8.2" fill="none" stroke="#6464D0" stroke-width="1"/><path d="M11.5,12.5 Q14.5,11 15.5,7.5 M11.5,15.2 Q16.5,13.5 17.2,8.5" fill="none" stroke="#8888F0" stroke-width="1"/></svg>
<div class="t tr" style="left:69px;top:377px">Sound, video and game controllers</div>
<div class="a" style="left:34px;top:397px;width:9px;height:9px;border:1px solid #A8A490;background:#fff"></div>
<div class="a" style="left:36px;top:401px;width:5px;height:1px;background:#000"></div>
<div class="a" style="left:38px;top:399px;width:1px;height:5px;background:#000"></div>
<svg class="a" style="left:49px;top:393px" width="16" height="16" viewBox="0 0 16 16"><defs><radialGradient id="gc" cx="0.5" cy="0.35" r="0.7"><stop offset="0" stop-color="#A8E8FF"/><stop offset="0.6" stop-color="#38A8F8"/><stop offset="1" stop-color="#1870E0"/></radialGradient></defs><polygon points="2.5,1.2 12.6,0.2 12.8,8.9 4.6,11.2" fill="#5050A8"/><polygon points="3.3,1.9 11.8,1.0 12.0,8.4 5.0,10.3" fill="url(#gc)"/><ellipse cx="8.3" cy="12.9" rx="5.4" ry="2.6" fill="#404078"/><ellipse cx="7.9" cy="12.6" rx="4.6" ry="1.9" fill="#E8E8F4"/><polygon points="9,10 11.5,9 12.5,13 10,14" fill="#3030A0"/></svg>
<div class="t tr" style="left:69px;top:393px">System devices</div>
<div class="a" style="left:34px;top:413px;width:9px;height:9px;border:1px solid #A8A490;background:#fff"></div>
<div class="a" style="left:36px;top:417px;width:5px;height:1px;background:#000"></div>
<div class="a" style="left:38px;top:415px;width:1px;height:5px;background:#000"></div>
<svg class="a" style="left:49px;top:409px" width="16" height="16" viewBox="0 0 16 16"><ellipse cx="2.8" cy="7.5" rx="2.5" ry="3.2" fill="#707070" stroke="#000" stroke-width="1"/><path d="M5,7.6 L13,7.6" stroke="#000" stroke-width="2"/><polygon points="11.5,3.5 16,7.6 11.5,11.7 12.5,7.6" fill="#000"/><path d="M5.5,5.5 L8,2.5" stroke="#000" stroke-width="1.2"/><path d="M6,9.5 L6,11.5 L9,14" fill="none" stroke="#000" stroke-width="1.2"/><circle cx="8.5" cy="2" r="1.6" fill="#909090" stroke="#000" stroke-width="1.1"/><rect x="9.5" y="11.5" width="3.5" height="3.5" fill="#909090" stroke="#000" stroke-width="1.2"/></svg>
<div class="t tr" style="left:69px;top:409px">Universal Serial Bus controllers</div>
<div class="a" style="left:9px;top:429px;width:632px;height:1px;background:#A09C8C"></div>
<div class="a" style="left:9px;top:430px;width:632px;height:21px;background:linear-gradient(to bottom,#DCD8C4,#E8E6D2 4px)"></div>
<div class="a" style="left:9px;top:451px;width:632px;height:1px;background:#F4F2E8"></div>
<div class="a" style="left:419px;top:433px;width:1px;height:17px;background:#B4B09C"></div>
<div class="a" style="left:420px;top:433px;width:1px;height:17px;background:#fff"></div>
<div class="a" style="left:552px;top:433px;width:1px;height:17px;background:#B4B09C"></div>
<div class="a" style="left:553px;top:433px;width:1px;height:17px;background:#fff"></div>
<div class="a" style="left:637px;top:433px;width:1px;height:17px;background:#B4B09C"></div>
<div class="a" style="left:638px;top:433px;width:1px;height:17px;background:#fff"></div>
<div class="t" style="left:10px;top:434px;letter-spacing:-0.1px">Launches the Hardware Update Wizard for the selected device.</div>
<svg class="a" style="left:11px;top:13px" width="16" height="16" viewBox="0 0 16 16"><rect x="3" y="0" width="10" height="9" fill="#A0A0A0"/><rect x="4" y="1" width="8" height="7" fill="#F4F4F0"/><rect x="5" y="3" width="5" height="4" fill="#0000F0"/><rect x="6" y="4" width="1" height="1" fill="#00FFFF"/><rect x="10" y="1" width="2" height="7" fill="#C0C0C0"/><rect x="12" y="1" width="1" height="8" fill="#808080"/><rect x="13" y="1" width="1" height="8" fill="#000"/><rect x="4" y="8" width="9" height="1" fill="#000"/><rect x="2" y="9" width="10" height="1" fill="#303030"/><rect x="2" y="10" width="1" height="1" fill="#000"/><rect x="3" y="10" width="1" height="1" fill="#fff"/><rect x="4" y="10" width="1" height="1" fill="#000"/><rect x="5" y="10" width="1" height="1" fill="#fff"/><rect x="6" y="10" width="1" height="1" fill="#000"/><rect x="7" y="10" width="1" height="1" fill="#fff"/><rect x="8" y="10" width="1" height="1" fill="#000"/><rect x="9" y="10" width="1" height="1" fill="#fff"/><rect x="10" y="10" width="1" height="1" fill="#000"/><rect x="11" y="10" width="1" height="1" fill="#fff"/><rect x="1" y="11" width="1" height="1" fill="#000"/><rect x="2" y="11" width="1" height="1" fill="#fff"/><rect x="3" y="11" width="1" height="1" fill="#000"/><rect x="4" y="11" width="1" height="1" fill="#fff"/><rect x="5" y="11" width="1" height="1" fill="#000"/><rect x="6" y="11" width="1" height="1" fill="#fff"/><rect x="7" y="11" width="1" height="1" fill="#000"/><rect x="8" y="11" width="1" height="1" fill="#fff"/><rect x="9" y="11" width="1" height="1" fill="#000"/><rect x="10" y="11" width="1" height="1" fill="#fff"/><rect x="11" y="11" width="1" height="1" fill="#000"/><rect x="0" y="12" width="12" height="1" fill="#fff"/><rect x="0" y="11" width="1" height="2" fill="#000"/><rect x="1" y="13" width="11" height="1" fill="#000"/><rect x="12" y="8" width="1" height="2" fill="#909090"/><rect x="13" y="9" width="1" height="2" fill="#000"/><rect x="11" y="11" width="4" height="3" fill="#fff"/><rect x="12" y="10" width="2" height="1" fill="#D0D0D0"/><rect x="15" y="11" width="1" height="3" fill="#000"/><rect x="14" y="10" width="1" height="1" fill="#000"/><rect x="11" y="14" width="4" height="1" fill="#000"/><rect x="12" y="12" width="2" height="1" fill="#C0C0C0"/></svg>
<div class="t" style="left:31.5px;top:13px;height:20px;line-height:20px;font-size:14px;font-weight:bold;color:#0A1A70;transform:scaleX(0.9);transform-origin:0 0">Device Manager</div>
<div class="t" style="left:30.5px;top:12px;height:20px;line-height:20px;font-size:14px;font-weight:bold;color:#fff;transform:scaleX(0.9);transform-origin:0 0">Device Manager</div>
<div class="a" style="left:572px;top:11px;width:21px;height:21px;border:1px solid #fff;border-radius:3px;background:radial-gradient(circle at 30% 30%,#4A88F8,#2060E8 60%,#1850D0)"></div>
<div class="a" style="left:595px;top:11px;width:21px;height:21px;border:1px solid #fff;border-radius:3px;background:radial-gradient(circle at 30% 30%,#4A88F8,#2060E8 60%,#1850D0)"></div>
<div class="a" style="left:618px;top:11px;width:21px;height:21px;border:1px solid #fff;border-radius:3px;background:radial-gradient(circle at 30% 30%,#E87050,#D84818 60%,#C03810)"></div>
<div class="a" style="left:577px;top:24px;width:7px;height:3px;background:#fff"></div>
<div class="a" style="left:600px;top:16px;width:11px;height:11px;border:1px solid #fff;border-top-width:3px"></div>
<svg class="a" style="left:618px;top:11px" width="21" height="21" viewBox="0 0 21 21"><path d="M5.5,5.5 L15.5,15.5 M15.5,5.5 L5.5,15.5" stroke="#fff" stroke-width="2"/></svg>
<div class="a" style="left:155px;top:127px;width:176px;height:107px;border:1px solid #ACA899;background:#fff"></div>
<div class="a" style="left:158px;top:129px;width:170px;height:17px;background:#2455B5"></div>
<div class="t" style="left:174px;top:129px;height:17px;line-height:17px;color:#fff;letter-spacing:-0.2px;">Update Driver…</div>
<div class="t" style="left:174px;top:146px;height:17px;line-height:17px;color:#000;letter-spacing:-0.25px;">Disable</div>
<div class="t" style="left:174px;top:163px;height:17px;line-height:17px;color:#000;letter-spacing:-0.2px;">Uninstall</div>
<div class="t" style="left:174px;top:189px;height:17px;line-height:17px;color:#000;letter-spacing:-0.1px;">Scan for hardware changes</div>
<div class="t" style="left:174px;top:215px;height:17px;line-height:17px;color:#000;font-weight:bold;letter-spacing:0.4px;">Properties</div>
<div class="a" style="left:159px;top:183px;width:168px;height:1px;background:#ACA899"></div>
<div class="a" style="left:159px;top:209px;width:168px;height:1px;background:#ACA899"></div>
<svg class="a" style="left:162px;top:134px" width="13" height="22" viewBox="0 0 13 22" shape-rendering="crispEdges"><polygon points="0.5,0.5 0.5,16.5 4.3,12.8 7.6,20.3 10,19.3 6.8,12 11.5,12" fill="#fff" stroke="#000" stroke-width="1"/></svg>
</body></html>
